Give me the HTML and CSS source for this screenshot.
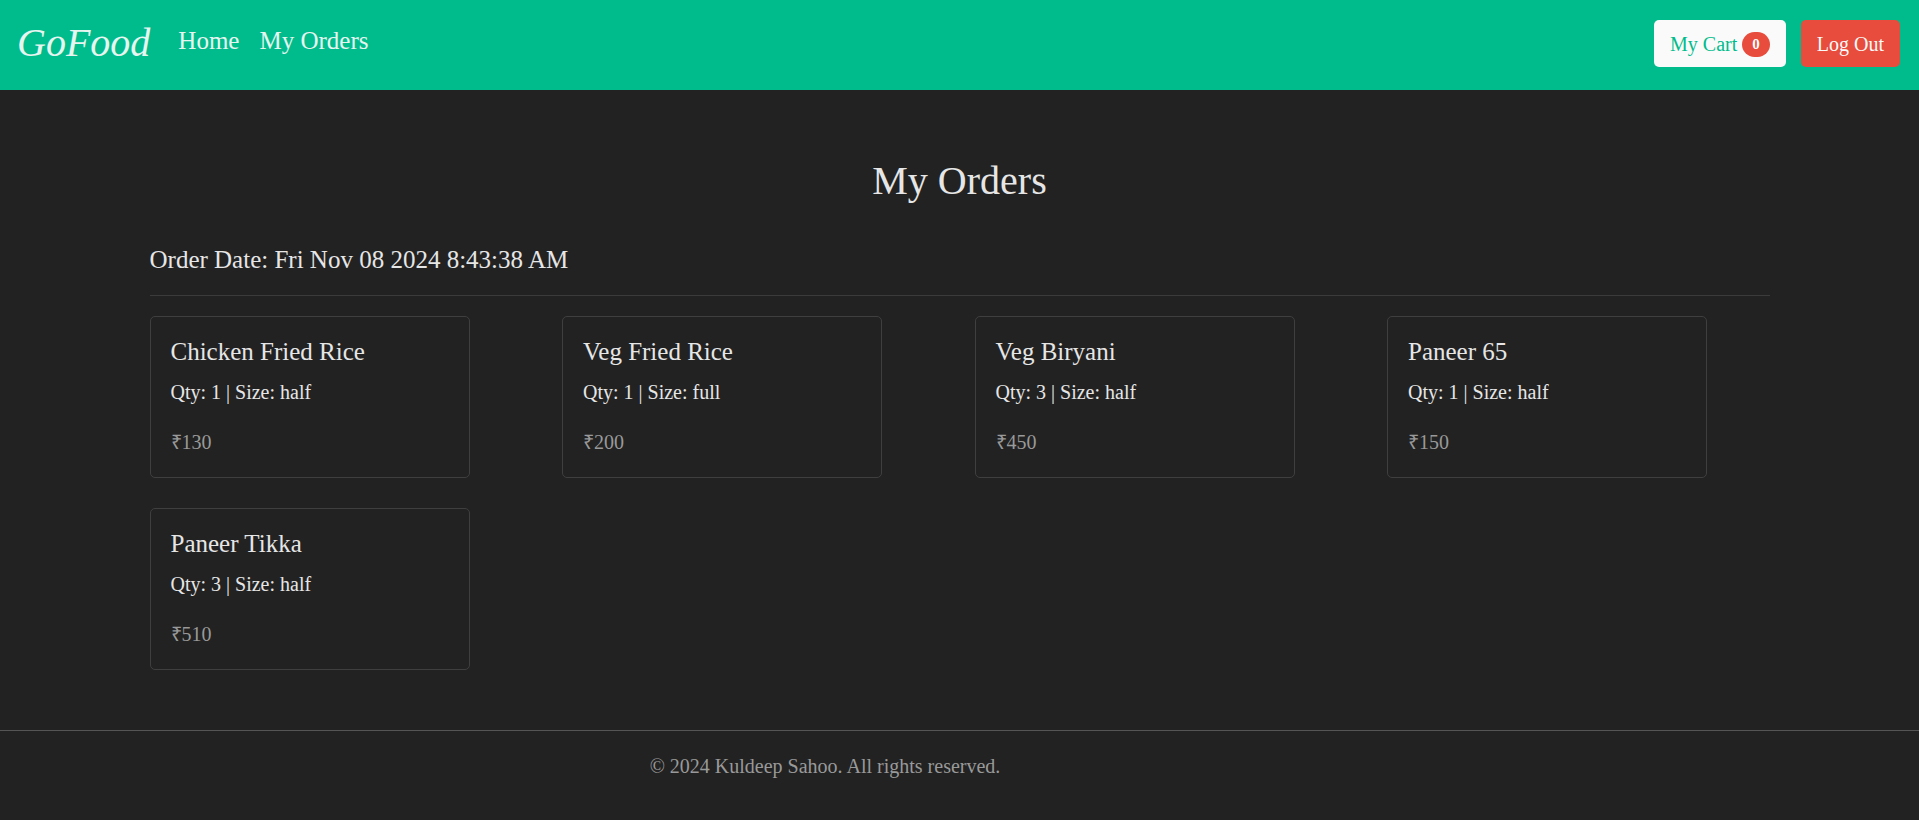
FILE: index.html
```html
<!DOCTYPE html>
<html lang="en">
<head>
<meta charset="utf-8">
<meta name="viewport" content="width=device-width, initial-scale=1">
<title>GoFood - My Orders</title>
<link rel="stylesheet" href="styles.css">
</head>
<body>
<nav class="navbar">
  <a class="brand" href="#">GoFood</a>
  <div class="nav-links">
    <a class="nav-link" href="#">Home</a>
    <a class="nav-link" href="#">My Orders</a>
  </div>
  <div class="nav-actions">
    <button class="btn btn-cart" type="button">My Cart <span class="badge">0</span></button>
    <button class="btn btn-logout" type="button">Log Out</button>
  </div>
</nav>
<main class="container">
  <h1 class="page-title">My Orders</h1>
  <section class="order">
    <h2 class="order-date">Order Date: Fri Nov 08 2024 8:43:38 AM</h2>
    <hr class="divider">
    <div class="cards">
      <article class="card">
        <h3 class="card-title">Chicken Fried Rice</h3>
        <p class="card-text">Qty: 1 | Size: half</p>
        <p class="card-price">₹130</p>
      </article>
      <article class="card">
        <h3 class="card-title">Veg Fried Rice</h3>
        <p class="card-text">Qty: 1 | Size: full</p>
        <p class="card-price">₹200</p>
      </article>
      <article class="card">
        <h3 class="card-title">Veg Biryani</h3>
        <p class="card-text">Qty: 3 | Size: half</p>
        <p class="card-price">₹450</p>
      </article>
      <article class="card">
        <h3 class="card-title">Paneer 65</h3>
        <p class="card-text">Qty: 1 | Size: half</p>
        <p class="card-price">₹150</p>
      </article>
      <article class="card">
        <h3 class="card-title">Paneer Tikka</h3>
        <p class="card-text">Qty: 3 | Size: half</p>
        <p class="card-price">₹510</p>
      </article>
    </div>
  </section>
</main>
<footer class="footer">
  <p class="copyright">© 2024 Kuldeep Sahoo. All rights reserved.</p>
</footer>
</body>
</html>
```
FILE: styles.css
```css
* {
  box-sizing: border-box;
}

body {
  margin: 0;
  background: #222;
  color: #e6e6e6;
  font-family: "Liberation Serif", "Times New Roman", serif;
  font-size: 20px;
  line-height: 30px;
}

h1, h2, h3, p {
  margin: 0;
  font-weight: 400;
}

.navbar {
  display: flex;
  align-items: flex-start;
  padding: 13px 19px 17px 17px;
  background: #00bc8c;
}

.brand {
  margin-right: 18px;
  color: #e6f5f0;
  font-size: 40px;
  font-style: italic;
  line-height: 60px;
  text-decoration: none;
}

.nav-links {
  display: flex;
  padding-top: 9px;
}

.nav-link {
  padding: 0 10px;
  color: #e6f5f0;
  font-size: 25px;
  line-height: 38px;
  text-decoration: none;
}

.nav-actions {
  display: flex;
  gap: 15px;
  margin-left: auto;
  padding-top: 7px;
}

.btn {
  display: flex;
  align-items: center;
  gap: 5px;
  padding: 9px 15px 7px;
  border: 1px solid transparent;
  border-radius: 5px;
  font: inherit;
  line-height: 29px;
  cursor: pointer;
}

.btn-cart {
  background: #fafafa;
  color: #00bc8c;
}

.btn-logout {
  background: #e74c3c;
  color: #fafafa;
}

.badge {
  padding: 5px 10px;
  border-radius: 50px;
  background: #e74c3c;
  color: #fff;
  font-size: 15px;
  font-weight: 700;
  line-height: 15px;
}

.container {
  max-width: 1650px;
  margin: 0 auto;
  padding: 67px 15px 30px;
}

.page-title {
  margin-bottom: 40px;
  font-size: 40px;
  line-height: 48px;
  text-align: center;
}

.order-date {
  font-size: 25px;
  line-height: 30px;
}

.divider {
  margin: 20px 0;
  border: 0;
  border-top: 1px solid #3b3b3b;
}

.cards {
  display: grid;
  grid-template-columns: repeat(4, 1fr);
  gap: 30px;
}

.card {
  width: 100%;
  max-width: 320px;
  padding: 20px;
  border: 1px solid #3f3f3f;
  border-radius: 5px;
}

.card-title {
  margin-bottom: 10px;
  font-size: 25px;
  line-height: 30px;
}

.card-text {
  margin-bottom: 20px;
}

.card-price,
.copyright {
  color: #999;
}

.footer {
  display: grid;
  grid-template-columns: repeat(3, 1fr);
  margin: 30px 0;
  padding: 20px 0;
  border-top: 1px solid #555;
}

.copyright {
  grid-column: 2;
  padding-left: 10px;
}
```
